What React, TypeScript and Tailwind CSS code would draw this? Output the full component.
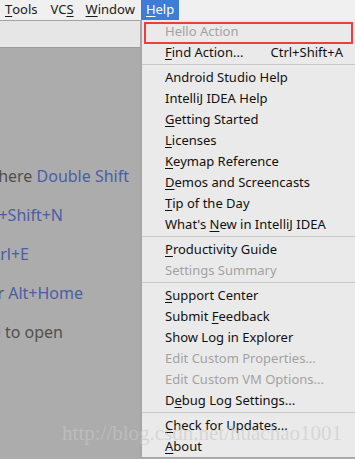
import React from 'react';

type Item =
  | { kind: 'sep' }
  | { kind: 'item'; label: string; mn?: number; disabled?: boolean; shortcut?: string };

const items: Item[] = [
  { kind: 'item', label: 'Hello Action', disabled: true },
  { kind: 'item', label: 'Find Action...', mn: 0, shortcut: 'Ctrl+Shift+A' },
  { kind: 'sep' },
  { kind: 'item', label: 'Android Studio Help' },
  { kind: 'item', label: 'IntelliJ IDEA Help' },
  { kind: 'item', label: 'Getting Started', mn: 0 },
  { kind: 'item', label: 'Licenses', mn: 0 },
  { kind: 'item', label: 'Keymap Reference', mn: 0 },
  { kind: 'item', label: 'Demos and Screencasts', mn: 0 },
  { kind: 'item', label: 'Tip of the Day', mn: 0 },
  { kind: 'item', label: "What's New in IntelliJ IDEA", mn: 7 },
  { kind: 'sep' },
  { kind: 'item', label: 'Productivity Guide', mn: 0 },
  { kind: 'item', label: 'Settings Summary', disabled: true },
  { kind: 'sep' },
  { kind: 'item', label: 'Support Center', mn: 0 },
  { kind: 'item', label: 'Submit Feedback', mn: 7 },
  { kind: 'item', label: 'Show Log in Explorer' },
  { kind: 'item', label: 'Edit Custom Properties...', disabled: true },
  { kind: 'item', label: 'Edit Custom VM Options...', disabled: true },
  { kind: 'item', label: 'Debug Log Settings...', mn: 1 },
  { kind: 'sep' },
  { kind: 'item', label: 'Check for Updates...', mn: 0 },
  { kind: 'item', label: 'About', mn: 0 },
];

function Mnemonic({ text, at }: { text: string; at?: number }) {
  if (at === undefined) return <>{text}</>;
  return (
    <>
      {text.slice(0, at)}
      <span className="underline underline-offset-2">{text[at]}</span>
      {text.slice(at + 1)}
    </>
  );
}

const hints: { gray: string; blue: string; pr: string }[] = [
  { gray: 'Search Everywhere ', blue: 'Double Shift', pr: 'pr-[11px]' },
  { gray: 'Go to File ', blue: 'Ctrl+Shift+N', pr: 'pr-[77px]' },
  { gray: 'Recent Files ', blue: 'Ctrl+E', pr: 'pr-[111px]' },
  { gray: 'Navigation Bar ', blue: 'Alt+Home', pr: 'pr-[57px]' },
  { gray: 'Drop files here to open', blue: '', pr: 'pr-[77px]' },
];

export default function App() {
  return (
    <div
      className="relative h-[459px] w-[355px] overflow-hidden bg-[#acacac]"
      style={{ fontFamily: '"Noto Sans", "Open Sans", sans-serif' }}
    >
      {/* menu bar */}
      <div className="flex h-[20px] items-stretch bg-[#f0f0f0] text-[13px] text-[#1a1a1a]">
        <div className="flex items-center pl-[5px] pr-[13px]"><Mnemonic text="Tools" at={0} /></div>
        <div className="flex items-center pr-[12px]"><Mnemonic text="VCS" at={2} /></div>
        <div className="flex items-center pr-[6px]"><Mnemonic text="Window" at={0} /></div>
        <div className="flex w-[38px] items-center bg-[#3d7dd7] pl-[5px] text-white">
          <Mnemonic text="Help" at={0} />
        </div>
      </div>
      <div className="h-px bg-[#a3a3a3]" />
      <div className="h-[27px] border-b border-[#9a9a9a] bg-[#e6e6e6]" />

      {/* dimmed editor hints */}
      <div className="flex w-[140px] flex-col gap-[17px] pt-[117px] text-[16px] leading-[22px]">
        {hints.map((h, i) => (
          <div key={i} className={`flex justify-end whitespace-pre ${h.pr}`}>
            <span className="text-[#505050]">{h.gray}</span>
            <span className="text-[#4a5ea6]">{h.blue}</span>
          </div>
        ))}
      </div>

      {/* Help dropdown */}
      <div className="absolute left-[140px] top-[20px] w-[215px] border-b border-l-2 border-[#a6a6a6] bg-[#eaeaea] pt-px text-[13px] text-[#111]">
        {items.map((it, i) =>
          it.kind === 'sep' ? (
            <div key={i} className="h-[4px] pt-px">
              <div className="h-px bg-[#c9c9c9]" />
            </div>
          ) : (
            <div
              key={i}
              className={`flex h-[21px] items-center pl-[23px] pr-[12px] whitespace-nowrap ${
                it.disabled ? 'text-[#a2a2a2]' : ''
              }`}
            >
              <span className="flex-1"><Mnemonic text={it.label} at={it.mn} /></span>
              {it.shortcut && <span>{it.shortcut}</span>}
            </div>
          )
        )}
      </div>

      {/* red highlight box */}
      <div className="absolute left-[144px] top-[22px] h-[22px] w-[209px] border-2 border-[#f03c3c]" />

      {/* watermark */}
      <div
        className="pointer-events-none absolute right-[13px] top-[418px] whitespace-nowrap text-[21px] text-[#c8c8c8]/60"
        style={{ fontFamily: '"Liberation Serif", serif' }}
      >
        http://blog.csdn.net/huachao1001
      </div>
    </div>
  );
}
